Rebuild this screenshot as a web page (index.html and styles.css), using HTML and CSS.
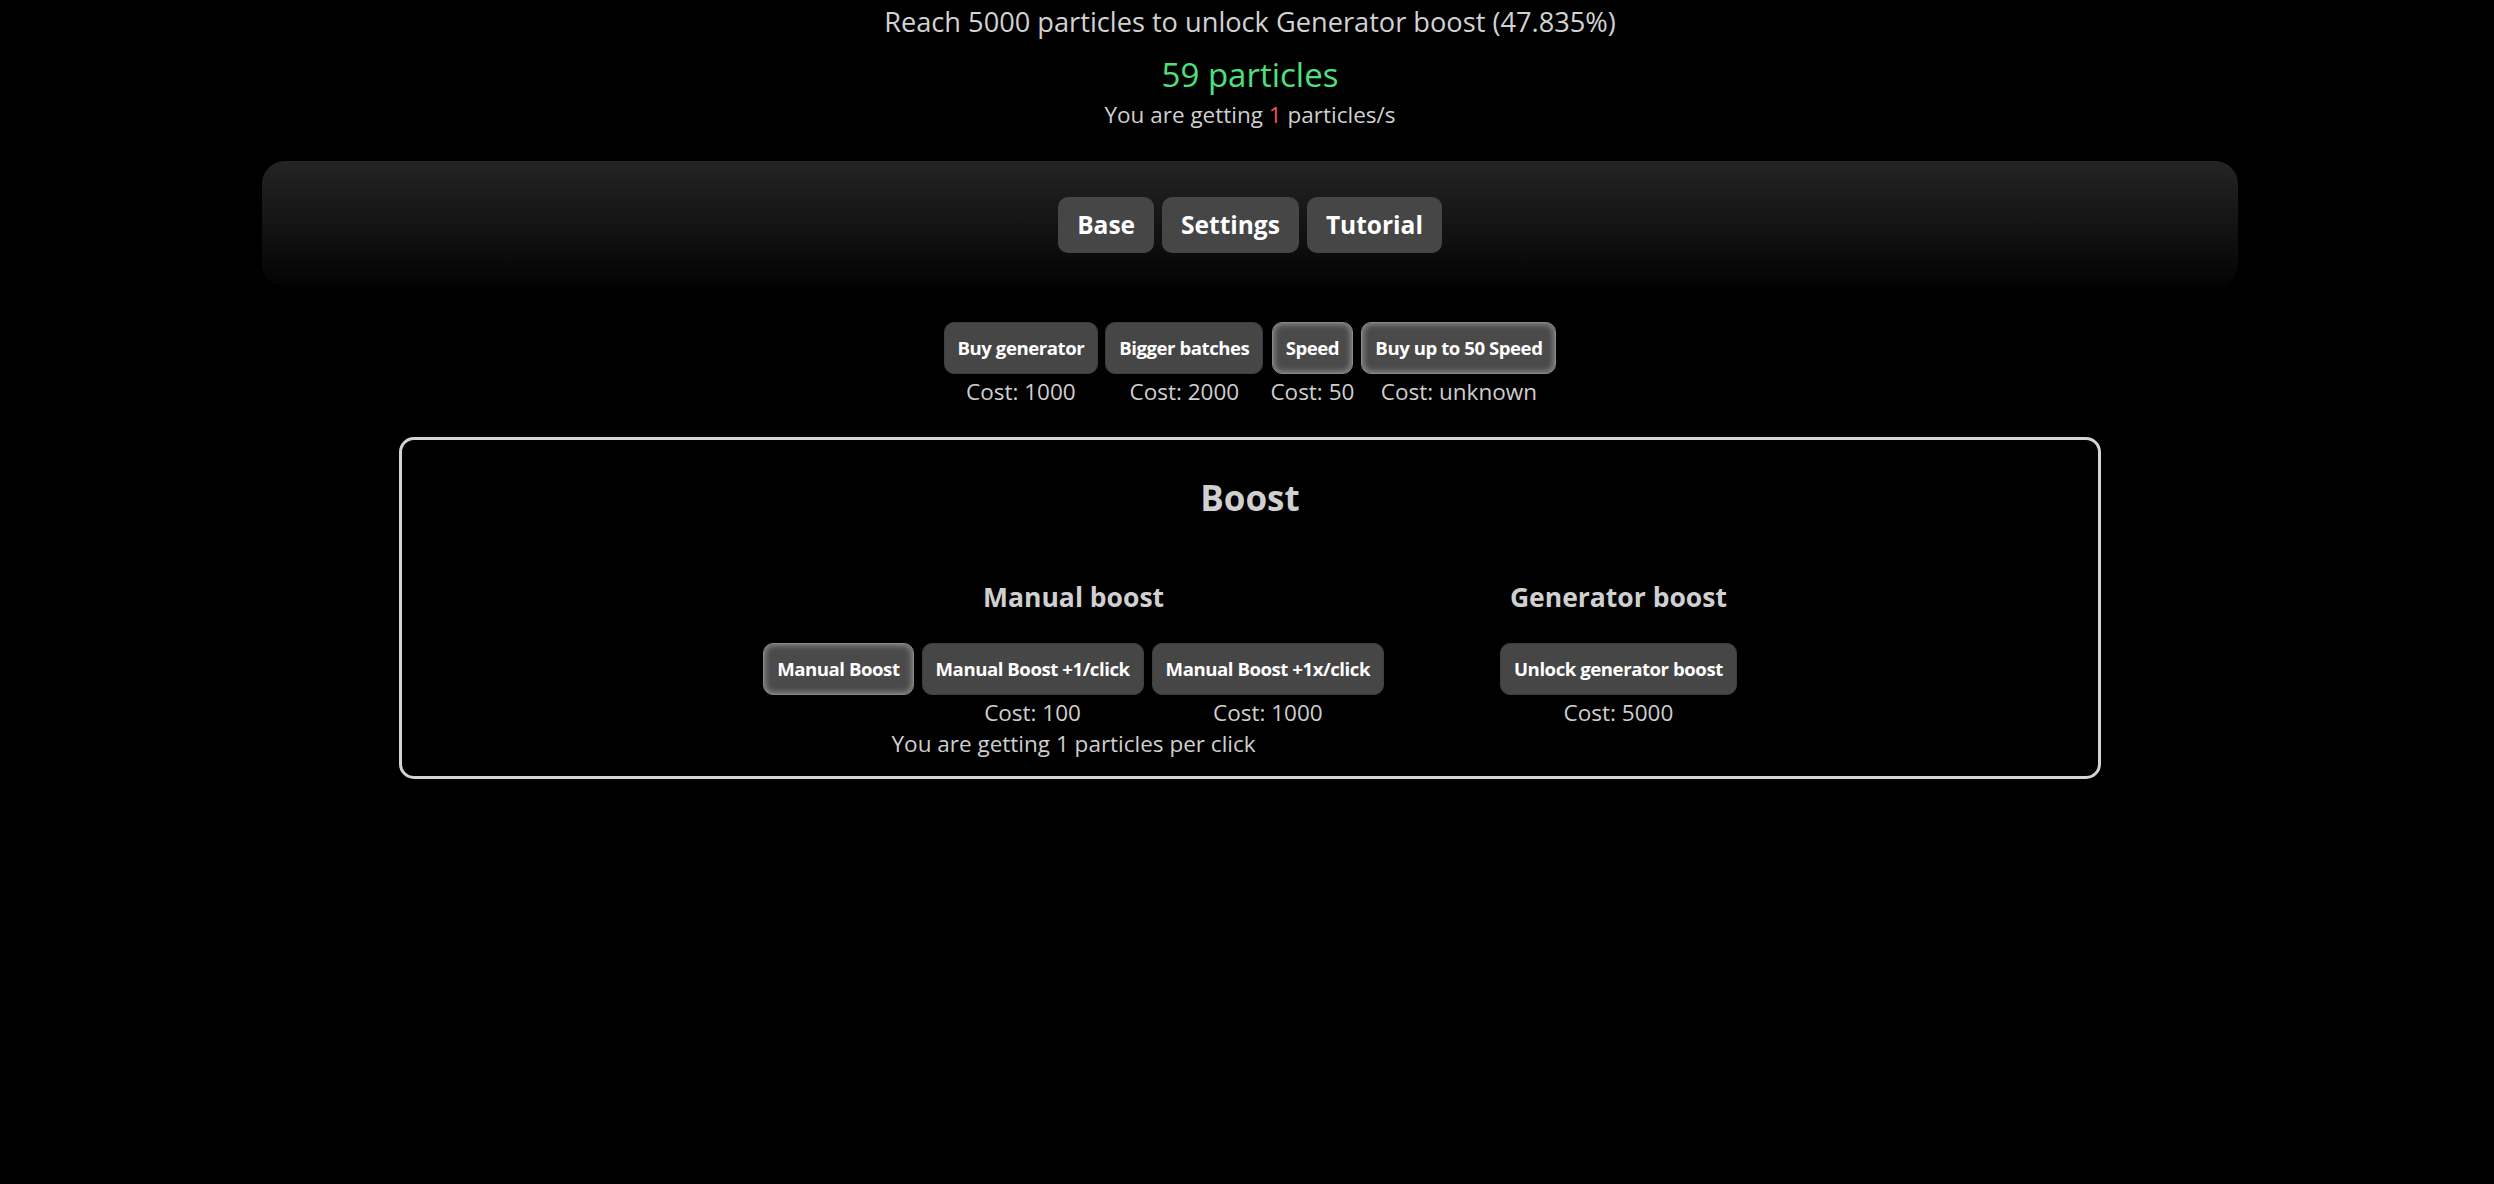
FILE: index.html
```html
<!DOCTYPE html>
<html lang="en">
<head>
<meta charset="utf-8">
<title>Particles</title>
<link rel="stylesheet" href="styles.css">
</head>
<body>
  <header class="stats">
    <div class="goal">Reach 5000 particles to unlock Generator boost (47.835%)</div>
    <div class="count">59 particles</div>
    <div class="rate">You are getting <span class="red">1</span> particles/s</div>
  </header>

  <nav class="tabs">
    <button class="tab">Base</button>
    <button class="tab">Settings</button>
    <button class="tab">Tutorial</button>
  </nav>

  <div class="shop">
    <div class="item">
      <button class="btn">Buy generator</button>
      <div class="cost">Cost: 1000</div>
    </div>
    <div class="item">
      <button class="btn">Bigger batches</button>
      <div class="cost">Cost: 2000</div>
    </div>
    <div class="item">
      <button class="btn can">Speed</button>
      <div class="cost">Cost: 50</div>
    </div>
    <div class="item">
      <button class="btn can">Buy up to 50 Speed</button>
      <div class="cost">Cost: unknown</div>
    </div>
  </div>

  <section class="boost-box">
    <h2 class="box-title">Boost</h2>
    <div class="boost-cols">
      <div class="col">
        <h3 class="col-title">Manual boost</h3>
        <div class="row">
          <div class="item">
            <button class="btn can">Manual Boost</button>
            <div class="cost"></div>
          </div>
          <div class="item">
            <button class="btn">Manual Boost +1/click</button>
            <div class="cost">Cost: 100</div>
          </div>
          <div class="item">
            <button class="btn">Manual Boost +1x/click</button>
            <div class="cost">Cost: 1000</div>
          </div>
        </div>
        <div class="note">You are getting <span class="num">1</span> particles per click</div>
      </div>
      <div class="col">
        <h3 class="col-title">Generator boost</h3>
        <div class="row">
          <div class="item">
            <button class="btn">Unlock generator boost</button>
            <div class="cost">Cost: 5000</div>
          </div>
        </div>
      </div>
    </div>
  </section>
</body>
</html>
```

FILE: styles.css
```css
html, body {
  margin: 0;
  padding: 0;
  background: #000;
}

body {
  padding-left: 6px;
  font-family: "Open Sans", "Noto Sans", sans-serif;
  color: #cfcfcf;
  text-align: center;
}

.stats {
  padding-top: 2px;
}

.goal {
  font-size: 27.2px;
  line-height: 40px;
  color: #d2d2d2;
}

.count {
  margin-top: 11px;
  font-size: 33px;
  line-height: 44px;
  color: #4ee07f;
}

.rate {
  margin-top: 2px;
  font-size: 22.5px;
  line-height: 32px;
}

.red {
  color: #f05555;
}

.tabs {
  box-sizing: border-box;
  width: 1976px;
  height: 126px;
  margin: 30px auto 0;
  padding-top: 36px;
  border-radius: 23px;
  background: linear-gradient(to bottom, #242424 0%, #121212 55%, #030303 100%);
  display: flex;
  justify-content: center;
  align-items: flex-start;
  gap: 8px;
}

.tab {
  height: 56px;
  padding: 0 19px;
  border: none;
  border-radius: 10px;
  background: #464646;
  color: #fff;
  font-family: inherit;
  font-size: 24.5px;
  font-weight: 700;
  line-height: 56px;
}

.shop {
  margin-top: 35px;
  display: flex;
  justify-content: center;
  gap: 7px;
}

.item {
  display: flex;
  flex-direction: column;
  align-items: center;
}

.btn {
  box-sizing: border-box;
  height: 52px;
  padding: 0 13px;
  border: 1px solid #3e3e3e;
  border-radius: 10px;
  background: #464646;
  color: #fff;
  font-family: inherit;
  font-size: 18.6px;
  font-weight: 700;
  letter-spacing: -0.45px;
  line-height: 50px;
  white-space: nowrap;
}

.btn.can {
  border-color: #8a8a8a;
  background: #4a4a4a;
  box-shadow: inset 0 0 6px 1px rgba(255, 255, 255, 0.42);
}

.cost {
  margin-top: 3px;
  height: 30px;
  font-size: 22.5px;
  line-height: 30px;
  color: #cfcfcf;
}

.boost-box {
  box-sizing: border-box;
  width: 1702px;
  margin: 30px auto 0;
  padding: 34px 0 17px;
  border: 3px solid #d4d4d4;
  border-radius: 15px;
}

.box-title {
  margin: 0;
  font-size: 35px;
  line-height: 48px;
  font-weight: 700;
  color: #d0d0d0;
}

.boost-cols {
  margin-top: 57px;
  display: flex;
  justify-content: center;
  align-items: flex-start;
  gap: 116px;
}

.col {
  display: flex;
  flex-direction: column;
  align-items: center;
}

.col-title {
  margin: 0 0 28px;
  font-size: 26.5px;
  line-height: 36px;
  font-weight: 700;
  color: #d0d0d0;
}

.row {
  display: flex;
  gap: 8px;
}

.note {
  margin-top: 1px;
  font-size: 22.5px;
  line-height: 30px;
}
```
